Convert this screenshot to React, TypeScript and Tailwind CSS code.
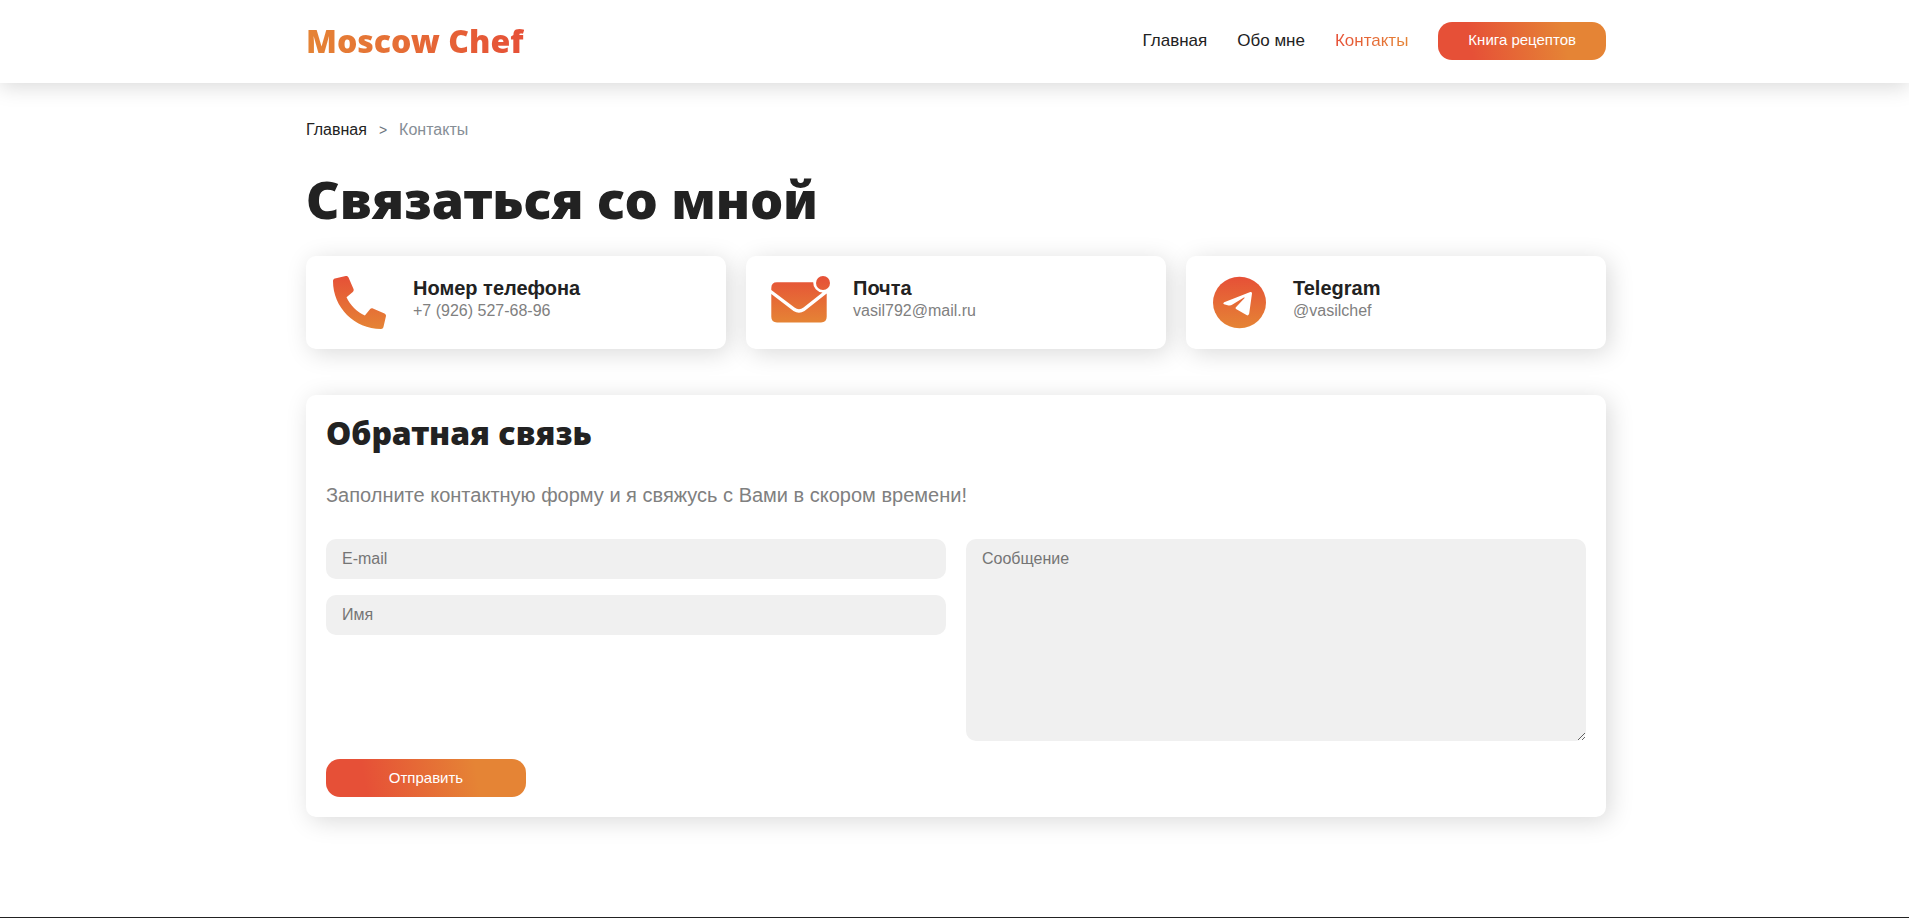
import type { ReactNode } from 'react';

const CONTAINER = 'mx-auto w-full max-w-[1300px]';
const SHADOW = 'shadow-[4px_4px_25px_rgba(0,0,0,0.15)]';
const BUTTON =
  'flex h-[38px] cursor-pointer items-center justify-center rounded-[14px] bg-[linear-gradient(80deg,#e65037_20%,#e58435_75%)] text-[15px] text-white';
const FIELD =
  'block w-full rounded-[10px] bg-[#f0f0f0] px-4 text-base text-[#222222] outline-none placeholder:text-[#757575]';

function Gradient({ id }: { id: string }) {
  return (
    <linearGradient id={id} x1="0" y1="0" x2="0" y2="1">
      <stop offset="0" stopColor="#e65037" />
      <stop offset="1" stopColor="#e58435" />
    </linearGradient>
  );
}

function PhoneIcon() {
  return (
    <svg width="53" height="53" viewBox="0 0 512 512" aria-hidden="true">
      <defs>
        <Gradient id="phone-fill" />
      </defs>
      <path
        transform="translate(512 0) scale(-1 1)"
        fill="url(#phone-fill)"
        d="M493.4 24.6l-104-24c-11.3-2.6-22.9 3.3-27.5 13.9l-48 112c-4.2 9.8-1.4 21.3 6.9 28l60.6 49.6c-36 76.7-98.9 140.5-177.2 177.2l-49.6-60.6c-6.8-8.3-18.2-11.1-28-6.9l-112 48C3.9 366.5-2 378.1.6 389.4l24 104C27.1 504.2 36.7 512 48 512c256.1 0 464-207.5 464-464 0-11.2-7.7-20.9-18.6-23.4z"
      />
    </svg>
  );
}

function MailIcon() {
  return (
    <svg width="60" height="53" viewBox="0 0 60 53" aria-hidden="true">
      <defs>
        <linearGradient id="mail-fill" gradientUnits="userSpaceOnUse" x1="0" y1="0" x2="0" y2="47">
          <stop offset="0" stopColor="#e65037" />
          <stop offset="1" stopColor="#e58435" />
        </linearGradient>
      </defs>
      <g fill="url(#mail-fill)">
        <circle cx="53" cy="7" r="7" />
        <path d="M7 6.200H43.200A10 10 0 0 0 52.500 16.500L33.500 31.600Q29 34.800 24.500 31.600L1.300 14V12Q1.300 6.200 7 6.200Z" />
        <path d="M1.300 18L23.500 35Q29 38.500 34.500 35L56.700 17.500V40.800Q56.700 46.500 51 46.500H7Q1.300 46.500 1.300 40.800Z" />
      </g>
    </svg>
  );
}

function TelegramIcon() {
  return (
    <svg width="53" height="53" viewBox="0 0 53 53" aria-hidden="true">
      <defs>
        <Gradient id="telegram-fill" />
      </defs>
      <ellipse cx="26.500" cy="26.500" rx="26.500" ry="25.700" fill="url(#telegram-fill)" />
      <path
        fill="#fff"
        d="M37.300 16.100Q39.100 15.500 39 17.500L36.200 37.600Q35.600 40.200 33.500 39.100L23 32.900Q22 32.200 22.900 31.300L31.600 22.100Q32 21.100 30.900 21.500L19.500 28.600Q17.700 29.900 15.500 29.500L11 28.300Q9.300 27.200 11.200 26.200Z"
      />
    </svg>
  );
}

function ContactCard({ icon, title, href, children }: { icon: ReactNode; title: string; href: string; children: ReactNode }) {
  return (
    <a href={href} className={`flex h-[93px] items-start gap-5 rounded-[10px] bg-white px-5 pt-5 ${SHADOW}`}>
      <span className="flex w-[67px] shrink-0 justify-center">{icon}</span>
      <span className="flex flex-col">
        <span className="text-[20px] leading-6 font-bold text-[#222222]">{title}</span>
        <span className="text-base leading-[22px] text-[#808080]">{children}</span>
      </span>
    </a>
  );
}

export default function App() {
  return (
    <div className="min-h-screen bg-white font-['Liberation_Sans',Arial,sans-serif] text-[#222222]">
      <header className="bg-white pl-[3px] shadow-[0_4px_20px_rgba(0,0,0,0.15)]">
        <div className={`${CONTAINER} flex h-[83px] items-center justify-between pb-[2px]`}>
          <a
            href="#"
            className="bg-[linear-gradient(90deg,#e58435,#e65037)] bg-clip-text font-['Noto_Sans',sans-serif] text-[32px] font-black text-transparent"
          >
            Moscow Chef
          </a>
          <nav className="flex items-center gap-[30px] text-[17px]">
            <a href="#">Главная</a>
            <a href="#about">Обо мне</a>
            <a href="#contacts" className="bg-[linear-gradient(90deg,#e65037,#e58435)] bg-clip-text text-transparent">
              Контакты
            </a>
            <a href="#book" className={`${BUTTON} px-[30px]`}>
              Книга рецептов
            </a>
          </nav>
        </div>
      </header>

      <main className="pb-[100px] pl-[3px]">
        <div className={CONTAINER}>
          <nav className="flex items-center gap-3 pt-[37px] leading-5" aria-label="Навигация">
            <a href="#">Главная</a>
            <span className="text-sm leading-5 text-[#6c757d]">&gt;</span>
            <span className="text-[#868e96]">Контакты</span>
          </nav>

          <h1 className="mt-[28px] font-['Noto_Sans',sans-serif] text-[52px] leading-[62px] font-black">Связаться со мной</h1>

          <section className="mt-[26px] grid grid-cols-3 gap-5">
            <ContactCard icon={<PhoneIcon />} title="Номер телефона" href="tel:+79265276896">
              +7 (926) 527-68-96
            </ContactCard>
            <ContactCard icon={<MailIcon />} title="Почта" href="mailto:vasil792@mail.ru">
              vasil792@mail.ru
            </ContactCard>
            <ContactCard icon={<TelegramIcon />} title="Telegram" href="#telegram">
              @vasilchef
            </ContactCard>
          </section>

          <section className={`mt-[46px] rounded-[10px] bg-white p-5 ${SHADOW}`}>
            <h2 className="font-['Noto_Sans',sans-serif] text-[32px] leading-9 font-black">Обратная связь</h2>
            <p className="mt-8 text-[20px] leading-6 text-[#808080]">
              Заполните контактную форму и я свяжусь с Вами в скором времени!
            </p>
            <form className="mt-8" onSubmit={(event) => event.preventDefault()}>
              <div className="grid grid-cols-2 gap-5">
                <div className="flex flex-col gap-4">
                  <input type="email" aria-label="E-mail" placeholder="E-mail" className={`${FIELD} h-10`} />
                  <input type="text" aria-label="Имя" placeholder="Имя" className={`${FIELD} h-10`} />
                </div>
                <textarea aria-label="Сообщение" placeholder="Сообщение" className={`${FIELD} h-[202px] resize py-2`} />
              </div>
              <button type="submit" className={`${BUTTON} mt-[18px] w-[200px]`}>
                Отправить
              </button>
            </form>
          </section>
        </div>
      </main>

      <footer className="h-px bg-[#222222]" />
    </div>
  );
}
